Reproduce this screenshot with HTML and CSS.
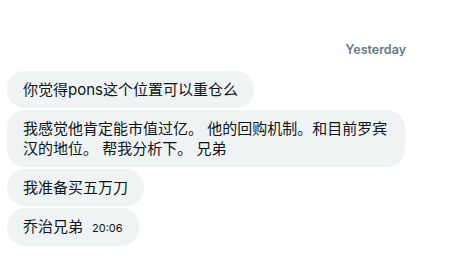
FILE: index.html
```html
<!DOCTYPE html>
<html lang="zh">
<head>
  <meta charset="utf-8">
  <meta name="viewport" content="width=device-width, initial-scale=1">
  <title>Messages</title>
  <link rel="stylesheet" href="styles.css">
</head>
<body>
  <div class="chat">
    <div class="day-label">Yesterday</div>
    <div class="messages">
      <div class="bubble">你觉得pons这个位置可以重仓么</div>
      <div class="bubble">我感觉他肯定能市值过亿。 他的回购机制。和目前罗宾汉的地位。 帮我分析下。 兄弟</div>
      <div class="bubble">我准备买五万刀</div>
      <div class="bubble">乔治兄弟<span class="time">20:06</span></div>
    </div>
  </div>
</body>
</html>
```

FILE: styles.css
```css
body {
  margin: 0;
  background: #ffffff;
  font-family: Inter, "Noto Sans CJK SC", sans-serif;
  color: #0f1419;
}

.chat {
  padding: 42px 7px 0 7px;
}

.day-label {
  text-align: right;
  padding-right: 60px;
  font-size: 12.5px;
  line-height: 16px;
  font-weight: 600;
  color: #66788a;
  margin-bottom: 13px;
}

.messages {
  display: flex;
  flex-direction: column;
  align-items: flex-start;
  gap: 2px;
}

.bubble {
  background: #eff3f4;
  border-radius: 18px;
  padding: 8.5px 16px;
  font-size: 15px;
  line-height: 20px;
  max-width: 366px;
}

.time {
  font-size: 11px;
  margin-left: 9px;
}
```
